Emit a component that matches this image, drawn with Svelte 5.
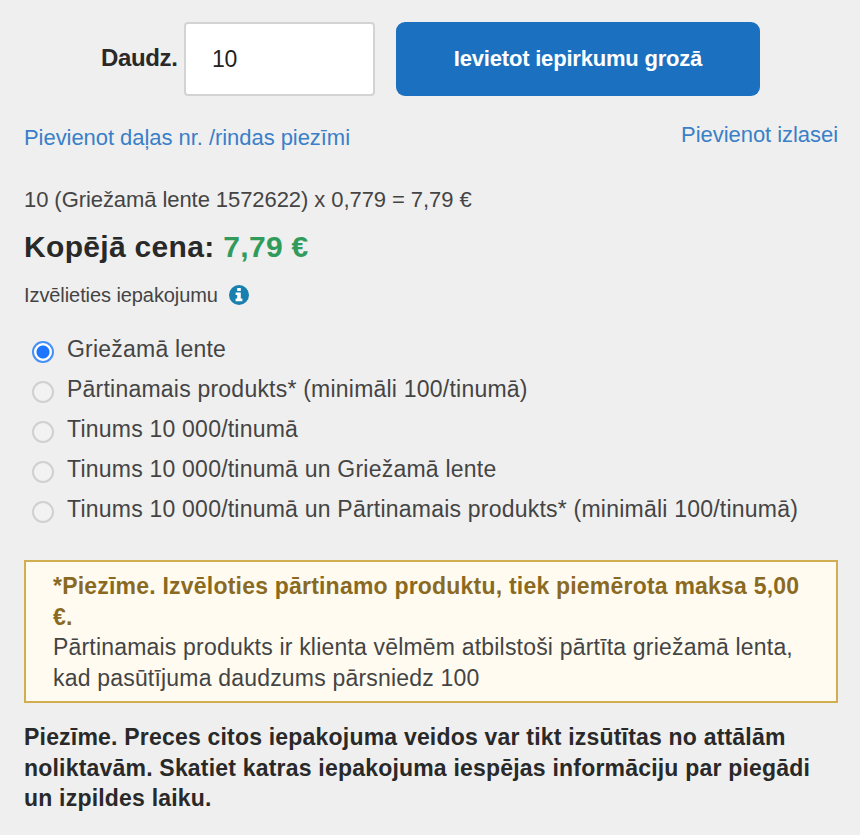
<script>
  let quantity = 10;
  let selected = "cut";

  const options = [
    { id: "cut", label: "Griežamā lente" },
    { id: "rereel", label: "Pārtinamais produkts* (minimāli 100/tinumā)" },
    { id: "reel", label: "Tinums 10 000/tinumā" },
    { id: "reel-cut", label: "Tinums 10 000/tinumā un Griežamā lente" },
    {
      id: "reel-rereel",
      label: "Tinums 10 000/tinumā un Pārtinamais produkts* (minimāli 100/tinumā)",
    },
  ];
</script>

<div class="order">
  <form class="buy" on:submit|preventDefault>
    <label for="quantity">Daudz.</label>
    <input type="text" id="quantity" name="quantity" bind:value={quantity} />
    <button type="submit"><span>Ievietot iepirkumu grozā</span></button>
  </form>

  <div class="links">
    <a class="note-link" href="#note">Pievienot daļas nr. /rindas piezīmi</a>
    <a class="fav-link" href="#favorites">Pievienot izlasei</a>
  </div>

  <div class="line-price"><span>10 (Griežamā lente 1572622) x 0,779 = 7,79 €</span></div>
  <div class="total"><span>Kopējā cena:</span> <span class="amount">7,79 €</span></div>

  <div class="choose">
    <span>Izvēlieties iepakojumu</span>
    <svg width="20" height="20" viewBox="0 0 20 20">
      <circle cx="10" cy="10" r="10" fill="#187fae" />
      <path
        fill="#fff"
        d="M8.2 3h3.6v3H8.2zM6.6 7.4h5.2v6.2h1.6v2.6H6.6v-2.6h1.6V10H6.6z"
      />
    </svg>
  </div>

  <div class="options">
    {#each options as option}
      <label class="option">
        <input type="radio" name="packaging" value={option.id} bind:group={selected} />
        <span>{option.label}</span>
      </label>
    {/each}
  </div>

  <div class="notice">
    <strong>*Piezīme. Izvēloties pārtinamo produktu, tiek piemērota maksa 5,00<br />€.</strong>
    <p>Pārtinamais produkts ir klienta vēlmēm atbilstoši pārtīta griežamā lenta,<br />kad pasūtījuma daudzums pārsniedz 100</p>
  </div>

  <p class="footnote">
    Piezīme. Preces citos iepakojuma veidos var tikt izsūtītas no attālām<br />
    noliktavām. Skatiet katras iepakojuma iespējas informāciju par piegādi<br />
    un izpildes laiku.
  </p>
</div>

<style>
  :global(body) {
    background: #efefef;
  }

  .order {
    box-sizing: border-box;
    width: 860px;
    height: 835px;
    padding: 22px 22px 0 24px;
    overflow: hidden;
    font-family: "Liberation Sans", Arial, sans-serif;
    font-size: 23px;
    color: #444;
    white-space: nowrap;
  }

  .buy {
    display: flex;
    align-items: flex-start;
    padding-left: 77px;
  }

  .buy label {
    width: 83px;
    line-height: 71px;
    font-size: 24px;
    font-weight: bold;
    letter-spacing: -0.35px;
    color: #292929;
  }

  .buy input {
    box-sizing: border-box;
    width: 191px;
    height: 74px;
    margin: 0 21px 0 0;
    padding: 0 26px;
    border: 2px solid #d3d3d3;
    border-radius: 4px;
    background: #fff;
    font-family: inherit;
    font-size: 23px;
    letter-spacing: -0.4px;
    color: #222;
  }

  .buy button {
    width: 364px;
    height: 74px;
    padding: 0 0 1px;
    border: none;
    border-radius: 9px;
    background: #1b71bf;
    font-family: inherit;
    font-size: 22px;
    font-weight: bold;
    letter-spacing: -0.2px;
    color: #fff;
    cursor: pointer;
  }

  .links {
    display: flex;
    justify-content: space-between;
    margin-top: 24px;
    line-height: 30px;
    font-size: 22px;
    letter-spacing: -0.05px;
  }

  .links a {
    color: #3a7fc8;
    text-decoration: none;
  }

  .note-link {
    padding-top: 3px;
  }

  .line-price {
    margin-top: 32px;
    line-height: 30px;
    font-size: 22px;
    letter-spacing: -0.07px;
  }

  .total {
    margin-top: 12px;
    line-height: 40px;
    font-size: 30px;
    font-weight: bold;
    letter-spacing: 0.32px;
    color: #292929;
  }

  .amount {
    color: #319b5b;
  }

  .choose {
    display: flex;
    align-items: center;
    gap: 11px;
    margin-top: 13px;
    line-height: 30px;
    font-size: 20px;
    letter-spacing: -0.08px;
  }

  .choose svg {
    margin-bottom: 1px;
  }

  .options {
    margin-top: 20px;
    letter-spacing: 0.22px;
  }

  .option {
    display: flex;
    align-items: center;
    height: 40px;
  }

  .option span {
    padding-bottom: 1px;
  }

  .option input {
    appearance: none;
    box-sizing: border-box;
    width: 22px;
    height: 22px;
    margin: 3px 13px 0 8px;
    border: 2px solid #d0d0d0;
    border-radius: 50%;
    background: #f2f2f2;
  }

  .option input:checked {
    border-color: #4590f8;
    background: radial-gradient(circle, #1f75fe 6px, #fff 7px);
  }

  .notice {
    box-sizing: border-box;
    width: 814px;
    height: 143px;
    margin-top: 30px;
    padding: 9px 27px;
    border: 2px solid #d2ae52;
    background: #fffbf0;
    line-height: 30.7px;
    letter-spacing: 0.19px;
  }

  .notice strong {
    letter-spacing: 0.21px;
    color: #8a6a22;
  }

  .notice p {
    margin: 0;
  }

  .footnote {
    margin: 19px 0 0;
    line-height: 30.5px;
    font-weight: bold;
    letter-spacing: 0.2px;
    color: #292929;
  }
</style>
